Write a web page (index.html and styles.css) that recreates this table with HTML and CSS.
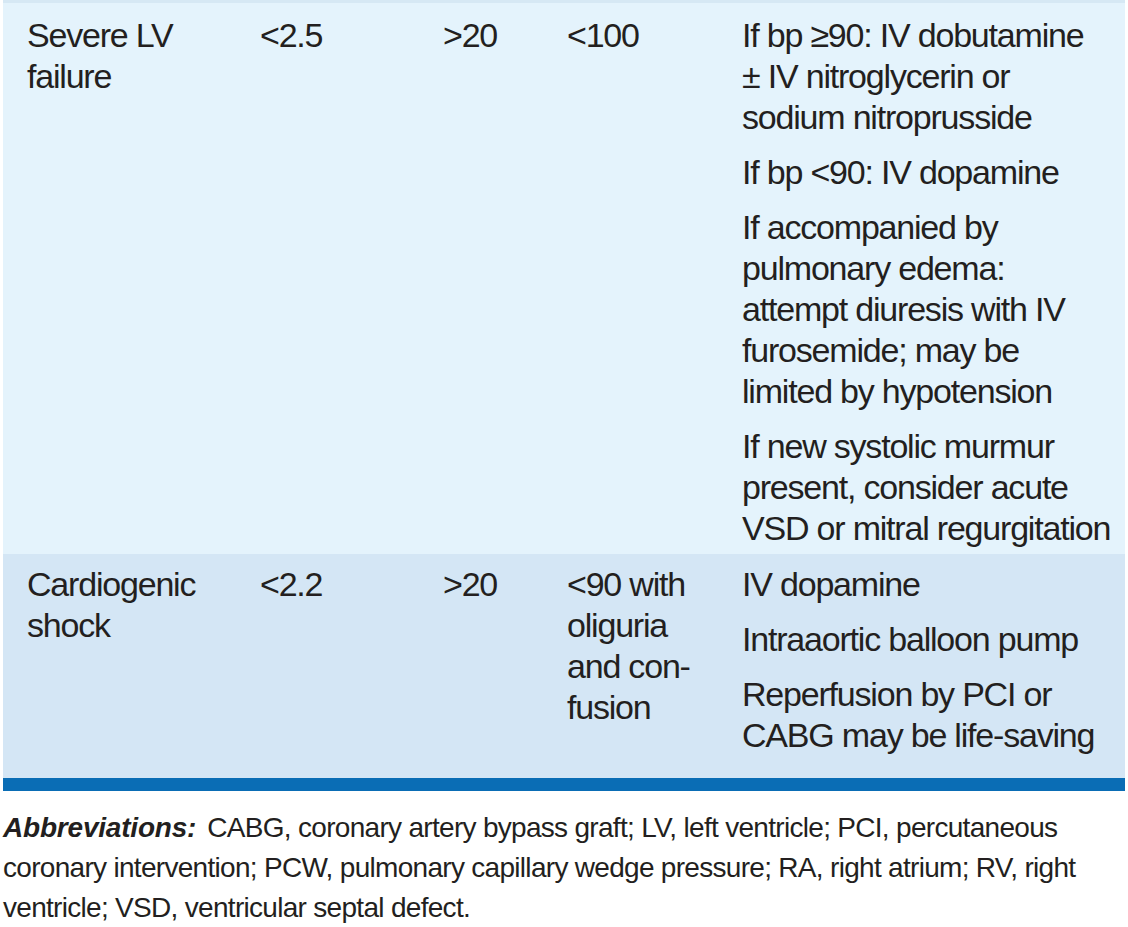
FILE: index.html
```html
<!DOCTYPE html>
<html>
<head>
<meta charset="utf-8">
<link rel="stylesheet" href="styles.css">
</head>
<body>
<div class="page">
  <div class="table">
    <div class="row row-a">
      <div class="cell c1">Severe LV<br>failure</div>
      <div class="cell c2">&lt;2.5</div>
      <div class="cell c3">&gt;20</div>
      <div class="cell c4">&lt;100</div>
      <div class="cell c5">
        <p>If bp &ge;90: IV dobutamine<br>&plusmn; IV nitroglycerin or<br>sodium nitroprusside</p>
        <p>If bp &lt;90: IV dopamine</p>
        <p>If accompanied by<br>pulmonary edema:<br>attempt diuresis with IV<br>furosemide; may be<br>limited by hypotension</p>
        <p>If new systolic murmur<br>present, consider acute<br>VSD or mitral regurgitation</p>
      </div>
    </div>
    <div class="row row-b">
      <div class="cell c1">Cardiogenic<br>shock</div>
      <div class="cell c2">&lt;2.2</div>
      <div class="cell c3">&gt;20</div>
      <div class="cell c4">&lt;90 with<br>oliguria<br>and con-<br>fusion</div>
      <div class="cell c5">
        <p>IV dopamine</p>
        <p>Intraaortic balloon pump</p>
        <p>Reperfusion by PCI or<br>CABG may be life-saving</p>
      </div>
    </div>
    <div class="bar"></div>
  </div>
  <p class="note"><b class="lead">Abbreviations:</b> CABG, coronary artery bypass graft; LV, left ventricle; PCI, percutaneous coronary intervention; PCW, pulmonary capillary wedge pressure; RA, right atrium; RV, right ventricle; VSD, ventricular septal defect.</p>
</div>
</body>
</html>
```

FILE: styles.css
```css
html, body {
  margin: 0;
  padding: 0;
  background: #ffffff;
}
body {
  font-family: "Liberation Sans", Arial, sans-serif;
  color: #231f20;
}
.page {
  width: 1128px;
  height: 927px;
  overflow: hidden;
}
.table {
  margin: 0 3px 0 3px;
  border-top: 3px solid #d6e8f4;
}
.row {
  display: grid;
  grid-template-columns: 233px 183px 124px 175px 1fr;
  font-size: 34px;
  line-height: 41px;
  letter-spacing: -1.2px;
}
.row-a {
  background: #e4f3fc;
  padding: 12px 0 5px;
}
.row-b {
  background: #d4e6f5;
  padding: 10px 0 22px;
}
.cell {
  padding-left: 24px;
  white-space: nowrap;
}
.c5 p {
  margin: 0 0 14px;
}
.c5 p:last-child {
  margin-bottom: 0;
}
.bar {
  height: 13px;
  background: #0a6db5;
}
.note {
  margin: 17px 0 0 3px;
  font-size: 28px;
  line-height: 40px;
  letter-spacing: -0.7px;
  width: 1095px;
}
.lead {
  font-weight: bold;
  font-style: italic;
  letter-spacing: -0.2px;
  margin-right: 4px;
}
```
